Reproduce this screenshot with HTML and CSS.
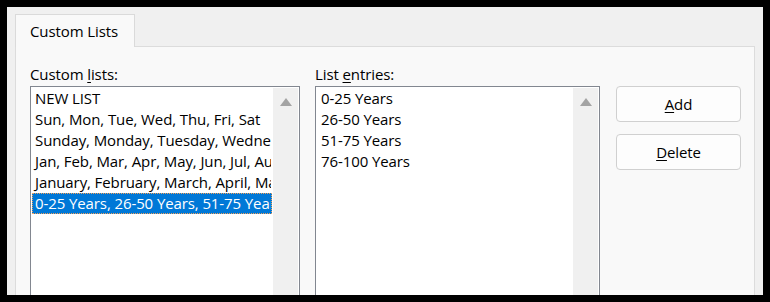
FILE: index.html
```html
<!DOCTYPE html>
<html>
<head>
<meta charset="utf-8">
<link rel="stylesheet" href="styles.css">
</head>
<body>
<div class="dialog">
  <div class="tabs">
    <div class="tab">Custom Lists</div>
  </div>
  <div class="panel">
    <div class="col col-lists">
      <div class="label">Custom <u>l</u>ists:</div>
      <div class="listbox">
        <div class="items">
          <div class="item">NEW LIST</div>
          <div class="item">Sun, Mon, Tue, Wed, Thu, Fri, Sat</div>
          <div class="item">Sunday, Monday, Tuesday, Wednesday, Thursday, Friday, Saturday</div>
          <div class="item">Jan, Feb, Mar, Apr, May, Jun, Jul, Aug, Sep, Oct, Nov, Dec</div>
          <div class="item">January, February, March, April, May, June, July</div>
          <div class="item selected">0-25 Years, 26-50 Years, 51-75 Years, 76-100 Years</div>
        </div>
        <div class="scrollbar"><div class="arrow"></div></div>
      </div>
    </div>
    <div class="col col-entries">
      <div class="label">List <u>e</u>ntries:</div>
      <div class="listbox">
        <div class="items entries">
          <div class="item">0-25 Years</div>
          <div class="item">26-50 Years</div>
          <div class="item">51-75 Years</div>
          <div class="item">76-100 Years</div>
        </div>
        <div class="scrollbar"><div class="arrow"></div></div>
      </div>
    </div>
    <div class="buttons">
      <button class="btn"><u>A</u>dd</button>
      <button class="btn"><u>D</u>elete</button>
    </div>
  </div>
</div>
</body>
</html>
```
FILE: styles.css
```css
html, body {
  margin: 0;
  padding: 0;
  background: #000;
}
body {
  font-family: "Open Sans", "Noto Sans", sans-serif;
  font-size: 15px;
  color: #000;
}
.dialog {
  margin: 7px;
  width: 756px;
  height: 288px;
  background: #f0f0f0;
  overflow: hidden;
  padding: 7px 0 0 8px;
  box-sizing: border-box;
}
.tabs {
  display: flex;
  height: 32px;
}
.tab {
  width: 120px;
  height: 33px;
  box-sizing: border-box;
  background: #f9f9f9;
  border: 1px solid #dadada;
  border-bottom: none;
  padding: 3px 0 0 14px;
  line-height: 26px;
  letter-spacing: -0.1px;
  position: relative;
  z-index: 1;
}
.panel {
  width: 740px;
  height: 260px;
  box-sizing: border-box;
  background: #f9f9f9;
  border: 1px solid #dcdcdc;
  display: flex;
  padding: 17px 0 0 14px;
}
.label {
  height: 21px;
  line-height: 20px;
  margin-bottom: 1px;
  letter-spacing: -0.1px;
}
.label u, .btn u {
  text-decoration-thickness: 1px;
  text-underline-offset: 2px;
}
.col-lists {
  width: 270px;
}
.col-entries {
  width: 285px;
  margin-left: 15px;
}
.listbox {
  height: 230px;
  background: #fff;
  border: 1px solid #828790;
  display: flex;
  padding: 1px 1px 0 1px;
}
.items {
  flex: 1;
  min-width: 0;
}
.item {
  height: 21px;
  line-height: 19px;
  padding-left: 2px;
  white-space: nowrap;
  overflow: hidden;
  letter-spacing: -0.1px;
  box-sizing: border-box;
  border: 1px solid transparent;
}
.entries .item {
  padding-left: 3px;
}
.item.selected {
  background: #0078d7;
  color: #fff;
  border: 1px dotted #f2a15a;
}
.scrollbar {
  width: 25px;
  background: #f0f0f0;
  margin-left: 1px;
  display: flex;
  justify-content: center;
  padding-top: 10px;
  box-sizing: border-box;
}
.arrow {
  width: 0;
  height: 0;
  border-left: 6px solid transparent;
  border-right: 6px solid transparent;
  border-bottom: 8px solid #a3a3a3;
}
.buttons {
  display: flex;
  flex-direction: column;
  gap: 12px;
  margin-left: 16px;
  padding-top: 22px;
}
.btn {
  width: 125px;
  height: 36px;
  background: #fdfdfd;
  border: 1px solid #d0d0d0;
  border-radius: 4px;
  font-family: "Open Sans", "Noto Sans", sans-serif;
  font-size: 15px;
  color: #000;
  padding: 0;
  letter-spacing: -0.1px;
}
```
